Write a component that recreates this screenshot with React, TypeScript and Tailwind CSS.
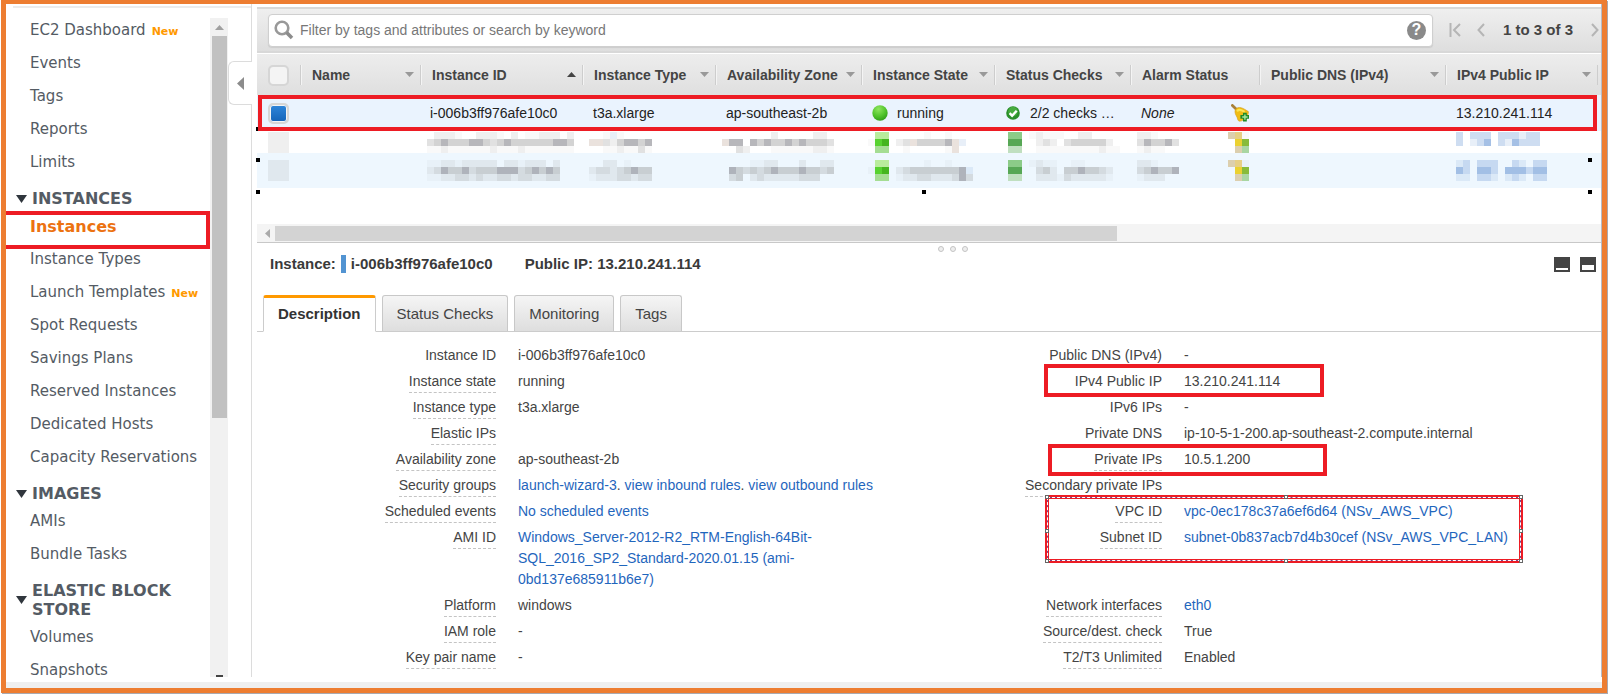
import { useState, type ReactNode } from "react";
import clsx from "clsx";

type NavItem = { label: string; isNew?: boolean };
type NavGroup = { title?: string; items: NavItem[] };

const navGroups: NavGroup[] = [
  {
    items: [
      { label: "EC2 Dashboard", isNew: true },
      { label: "Events" },
      { label: "Tags" },
      { label: "Reports" },
      { label: "Limits" },
    ],
  },
  {
    title: "INSTANCES",
    items: [
      { label: "Instances" },
      { label: "Instance Types" },
      { label: "Launch Templates", isNew: true },
      { label: "Spot Requests" },
      { label: "Savings Plans" },
      { label: "Reserved Instances" },
      { label: "Dedicated Hosts" },
      { label: "Capacity Reservations" },
    ],
  },
  { title: "IMAGES", items: [{ label: "AMIs" }, { label: "Bundle Tasks" }] },
  { title: "ELASTIC BLOCK STORE", items: [{ label: "Volumes" }, { label: "Snapshots" }] },
];

type Column = { label: string; width: string; sort?: "asc" | "none" };

const columns: Column[] = [
  { label: "Name", width: "w-[120px]", sort: "none" },
  { label: "Instance ID", width: "w-[162px]", sort: "asc" },
  { label: "Instance Type", width: "w-[133px]", sort: "none" },
  { label: "Availability Zone", width: "w-[146px]", sort: "none" },
  { label: "Instance State", width: "w-[133px]", sort: "none" },
  { label: "Status Checks", width: "w-[136px]", sort: "none" },
  { label: "Alarm Status", width: "w-[129px]" },
  { label: "Public DNS (IPv4)", width: "w-auto", sort: "none" },
  { label: "IPv4 Public IP", width: "w-[152px]", sort: "none" },
];

// Masked cells: three rows of 7px blocks, one letter per block
const blockColors: Record<string, string> = {
  a: "#8080800d",
  b: "#80808020",
  c: "#8080803c",
  d: "#80808058",
  e: "#70707880",
  f: "#b8a0904d",
  g: "#b9ec9c",
  G: "#57d22f",
  H: "#45b51f",
  i: "#a5dd93",
  j: "#8ccb88",
  J: "#57a755",
  k: "#c0dfc0",
  y: "#e6cf85",
  Y: "#ebd130",
  z: "#dccfae",
  m: "#88bb3a",
  n: "#a9d6a2",
  p: "#9dbce33d",
  q: "#9dbce380",
  Q: "#8fb0dfcc",
};

const maskedRows: string[][][] = [
  [
    [" bbba  bbba b aabbb b", "cdedddeedcdeddddddeed", "aabaaaaaabaaabaaaaaaa"],
    ["  apa    ", "ffcbdeede", "  aabaaca"],
    ["       b     bb ", "fee ededdededddc", "  cb   aaaaaabba"],
    [" gg     a  a   ", "aGH bcfddddefp", " ii  a     af  "],
    [" jj abaaa  bb  ", " JJ  bcb cdddddb ", " kk  aaaaaaaaabaa"],
    ["bba          zya", "ceddec        Ym", "abaa          zn"],
    ["q qqq qqqpqq", "q pqQ qpQqqq", "            "],
  ],
  [
    ["aabbabbbbb bbabbb b", "bceddecdddeeecdeded", "aabbccbcbbccbccbbcc"],
    ["  bb a   ", "bccbcdedd", "abbbccbcc"],
    ["    aabb   b  bb", " edcdcdedddeddcd", " cd bcbbbbbccc"],
    [" gg     a  a   ", "aGH bcdddddddep", " ii abbccbbbcec"],
    [" jj abaa  aa   ", " JJ  cdb ddeddcb ", " kk  bbbacbbbbba "],
    ["bba          zya", "cdedde        Ym", "abbb          zn"],
    ["pq qqq  qp qq", "Qq QQq QQQqQQ", "pp qqp pqp qq"],
  ],
];

function Masked({ rows }: { rows: string[] }) {
  const cols = Math.max(...rows.map((r) => r.length));
  return (
    <svg width={cols * 7} height={21} shapeRendering="crispEdges" className="block" aria-hidden="true">
      {rows.map((row, y) =>
        row.split("").map((c, x) =>
          blockColors[c] ? <rect key={`${x}-${y}`} x={x * 7} y={y * 7} width={7} height={7} fill={blockColors[c]} /> : null
        )
      )}
    </svg>
  );
}

function SearchIcon() {
  return (
    <svg width="20" height="20" viewBox="0 0 20 20" fill="none" aria-hidden="true">
      <circle cx="8" cy="8" r="6.3" stroke="#999" strokeWidth="2.6" />
      <path d="M12.6 12.6l5.4 5.4" stroke="#8c8c8c" strokeWidth="3.6" />
    </svg>
  );
}

function Arrow({ dir, className }: { dir: "up" | "down" | "left"; className?: string }) {
  const d = { up: "M0 5L4.5 0L9 5Z", down: "M0 0H9L4.5 5Z", left: "M5 0V9L0 4.5Z" }[dir];
  return (
    <svg
      width={dir === "left" ? 5 : 9}
      height={dir === "left" ? 9 : 5}
      viewBox={dir === "left" ? "0 0 5 9" : "0 0 9 5"}
      preserveAspectRatio="none"
      fill="currentColor"
      className={clsx("shrink-0", className)}
      aria-hidden="true"
    >
      <path d={d} />
    </svg>
  );
}

function RunningDot() {
  return (
    <svg width="16" height="16" viewBox="0 0 16 16" aria-hidden="true">
      <defs>
        <radialGradient id="dot" cx="0.4" cy="0.25" r="0.8">
          <stop offset="0" stopColor="#8fe65f" />
          <stop offset="0.6" stopColor="#4fc32b" />
          <stop offset="1" stopColor="#2f9a18" />
        </radialGradient>
      </defs>
      <circle cx="8" cy="8" r="7.7" fill="url(#dot)" />
    </svg>
  );
}

function CheckDot() {
  return (
    <svg width="14" height="14" viewBox="0 0 14 14" aria-hidden="true">
      <circle cx="7" cy="7" r="6.8" fill="#2a8f2a" />
      <circle cx="7" cy="5.6" r="4.8" fill="#46ab3f" />
      <path d="M3.6 7.2l2.5 2.5 4.6-5" fill="none" stroke="#fff" strokeWidth="2.4" />
    </svg>
  );
}

function AlarmBell() {
  return (
    <svg width="18" height="18" viewBox="0 0 18 18" aria-hidden="true">
      <path d="M1.4 1.4l4.2 4" stroke="#a8803a" strokeWidth="2.8" strokeLinecap="round" />
      <path
        d="M4 8C3.8 5 6.4 3 9.4 3.6C12.6 4.2 14.6 6 17.4 7.6C17.8 11.6 13.4 17 8.6 17.2C7.8 17.2 6.8 16.4 6.6 15C6.2 12.4 4.2 11 4 8Z"
        fill="#f0bd14"
        stroke="#d39c1c"
        strokeWidth="0.6"
      />
      <path d="M6.6 6.6C8.4 5 11 6.4 12.8 7.4" stroke="#fbe452" strokeWidth="2.2" strokeLinecap="round" fill="none" />
      <path d="M12 8.8h3.8v2.3H18v3.7h-2.2v2.7H12v-2.7H9.4v-3.7H12Z" fill="#1f8a26" />
      <path d="M13.9 10.4v5.4M11.2 13h5.4" stroke="#a6e69e" strokeWidth="1.4" />
    </svg>
  );
}

function Check({ label, defaultChecked }: { label: string; defaultChecked?: boolean }) {
  return (
    <input
      type="checkbox"
      aria-label={label}
      defaultChecked={defaultChecked}
      className="block size-[21px] appearance-none rounded-[5px] border-2 border-[#d6d6d6] bg-[#f4f4f4] bg-clip-padding checked:bg-linear-to-b checked:from-[#2f86da] checked:to-[#1463b8] checked:shadow-[inset_0_0_0_1px_#f4f4f4]"
    />
  );
}

function Sidebar() {
  return (
    <aside className="relative flex w-[246px] shrink-0 border-r border-[#dcdcdc]">
      <div className="absolute top-[2px] right-0 left-[7px] h-[2px] bg-[#ececec]" />
      <nav className="min-h-0 flex-1 pt-[10px] font-['DejaVu_Sans','Verdana',sans-serif] text-[15px] text-[#545b64]">
        {navGroups.map((group, i) => (
          <div key={i}>
            {group.title && (
              <h2 className="flex items-center gap-[5px] pt-[10px] pr-6 pb-[2px] pl-[10px] text-base leading-[19px] font-bold">
                <Arrow dir="down" className="h-[8px] w-[11px] text-[#30363d]" />
                {group.title}
              </h2>
            )}
            <ul>
              {group.items.map((item) => (
                <li key={item.label} className="flex h-[33px] items-center pl-6">
                  <a
                    href="#"
                    className={clsx("whitespace-nowrap", item.label === "Instances" && "text-base font-bold text-[#ec7211]")}
                  >
                    {item.label}
                    {item.isNew && <span className="ml-[6px] text-[11px] font-bold text-[#ff9900]">New</span>}
                  </a>
                </li>
              ))}
            </ul>
          </div>
        ))}
      </nav>
      {/* Scrollbar */}
      <div className="mt-[14px] mr-[23px] flex w-[18px] shrink-0 flex-col items-center bg-[#f1f1f1]">
        <div className="flex h-[18px] items-center">
          <Arrow dir="up" className="text-[#a0a0a0]" />
        </div>
        <div className="h-[58%] w-[15px] bg-[#c1c1c1]" />
        <div className="mt-auto h-[2px] w-[7px] bg-[#444]" />
      </div>
      {/* Highlight around the active entry */}
      <div className="pointer-events-none absolute top-[207px] left-0 h-[38px] w-[204px] border-4 border-l-0 border-[#ed1c24]" />
      <button
        aria-label="Collapse menu"
        className="absolute top-[57px] -right-px flex h-[44px] w-[24px] items-center justify-center rounded-l-md border border-r-0 border-[#dcdcdc] bg-white text-[#8c8c8c]"
      >
        <Arrow dir="left" className="h-[13px] w-[7px]" />
      </button>
    </aside>
  );
}

function Toolbar() {
  return (
    <div className="flex h-[46px] shrink-0 items-center border-y-2 border-[#d8d8d8] bg-linear-to-b from-[#efefef] to-[#dedede] pl-[11px]">
      <div className="flex h-[33px] min-w-0 flex-1 items-center rounded-[4px] border border-[#cfcfcf] bg-white pr-[6px] pl-[5px] shadow-[0_1px_1px_#ccc]">
        <SearchIcon />
        <input
          aria-label="Filter instances"
          placeholder="Filter by tags and attributes or search by keyword"
          className="ml-[6px] min-w-0 flex-1 text-sm outline-none placeholder:text-[#777]"
        />
        <button aria-label="Help" className="flex size-[19px] items-center justify-center rounded-full bg-[#8a8a8a] text-base leading-none font-bold text-white">
          ?
        </button>
      </div>
      <div className="flex items-center pl-4 text-[#b5b5b5]">
        <button aria-label="First page">
          <svg width="12" height="14" fill="none" stroke="currentColor" strokeWidth="2"><path d="M1.5 0v14M11 1L5 7l6 6" /></svg>
        </button>
        <button aria-label="Previous page" className="ml-4">
          <svg width="8" height="14" fill="none" stroke="currentColor" strokeWidth="2"><path d="M7 1L1.5 7L7 13" /></svg>
        </button>
        <span className="ml-[18px] text-[15px] font-bold whitespace-nowrap text-[#444]">1 to 3 of 3</span>
        <button aria-label="Next page" className="mr-[2px] ml-[18px]">
          <svg width="8" height="14" fill="none" stroke="currentColor" strokeWidth="2"><path d="M1 1l5.5 6L1 13" /></svg>
        </button>
      </div>
    </div>
  );
}

function Handle({ className }: { className: string }) {
  return <span className={clsx("absolute size-[4px] bg-black", className)} />;
}

function InstanceTable() {
  return (
    <div className="relative mt-px h-[170px] shrink-0">
      <table className="w-full table-fixed border-collapse text-sm whitespace-nowrap text-[#222]">
        <colgroup>
          <col className="w-[43px]" />
          {columns.map((c) => (
            <col key={c.label} className={c.width} />
          ))}
          <col className="w-[4px]" />
        </colgroup>
        <thead>
          <tr className="h-[41px] bg-linear-to-b from-[#ededed] to-[#dfdfdf] text-left text-[#444]">
            <th className="p-0 pt-[2px] pl-[11px]">
              <Check label="Select all" />
            </th>
            {columns.map((c) => (
              <th key={c.label} className="p-0">
                <div className="flex h-5 items-center justify-between border-l border-[#cdcdcd] pr-[6px] pl-[11px] shadow-[inset_1px_0_0_#f4f4f4]">
                  {c.label}
                  {c.sort && (
                    <Arrow dir={c.sort === "asc" ? "up" : "down"} className={c.sort === "asc" ? "text-[#444]" : "text-[#999]"} />
                  )}
                </div>
              </th>
            ))}
            <th className="p-0">
              <div className="h-5 border-l border-[#cdcdcd]" />
            </th>
          </tr>
        </thead>
        <tbody>
          <tr className="h-[36px] bg-[#eaf3fe]">
            <td className="p-0 pl-[11px]">
              <Check label="Select i-006b3ff976afe10c0" defaultChecked />
            </td>
            <td />
            <td className="p-0 pl-[10px]">i-006b3ff976afe10c0</td>
            <td className="p-0 pl-[11px]">t3a.xlarge</td>
            <td className="p-0 pl-[11px]">ap-southeast-2b</td>
            <td className="p-0 pl-[11px]">
              <div className="flex items-center gap-[9px]">
                <RunningDot />
                running
              </div>
            </td>
            <td className="p-0 pl-3">
              <div className="flex items-center gap-[10px]">
                <CheckDot />
                2/2 checks …
              </div>
            </td>
            <td className="p-0 pr-[10px] pl-[11px]">
              <div className="flex items-center justify-between">
                <i>None</i>
                <AlarmBell />
              </div>
            </td>
            <td />
            <td className="p-0 pl-[11px]">13.210.241.114</td>
            <td />
          </tr>
          {maskedRows.map((cells, i) => (
            <tr key={i} className={i === 0 ? "h-[22px] align-top" : "h-[35px] bg-[#eef7fe] align-top"}>
              <td className={clsx("p-0 pl-[11px]", i === 0 ? "pt-px" : "pt-[7px]")}>
                <Masked rows={["bbb", "bbb", "bbb"]} />
              </td>
              <td />
              {cells.slice(0, 6).map((rows, j) => (
                <td key={j} className={clsx("p-0 pl-[7px]", i === 0 ? "pt-px" : "pt-[7px]")}>
                  <Masked rows={rows} />
                </td>
              ))}
              <td />
              <td className={clsx("p-0 pl-[11px]", i === 0 ? "pt-px" : "pt-[7px]")}>
                <Masked rows={cells[6]} />
              </td>
              <td />
            </tr>
          ))}
        </tbody>
      </table>
      {/* Highlight around the selected row, with selection handles below */}
      <Handle className="top-[73px] -left-px" />
      <div className="pointer-events-none absolute top-[41px] right-[4px] left-px h-[36px] border-4 border-[#ed1c24]" />
      <Handle className="top-[104px] -left-px" />
      <Handle className="top-[136px] -left-px" />
      <Handle className="top-[136px] left-[49.5%]" />
      <Handle className="top-[104px] right-[9px]" />
      <Handle className="top-[136px] right-[9px]" />
    </div>
  );
}

type Detail = {
  label: string;
  value?: ReactNode;
  dashed?: boolean;
  mark?: string;
  selected?: boolean;
};

const link = (text: string) => (
  <a href="#" className="text-[#1f66bd]">
    {text}
  </a>
);

const details: [Detail, Detail][] = [
  [
    { label: "Instance ID", value: "i-006b3ff976afe10c0" },
    { label: "Public DNS (IPv4)", value: "-" },
  ],
  [
    { label: "Instance state", value: "running", dashed: true },
    { label: "IPv4 Public IP", value: "13.210.241.114", mark: "-top-[6px] -left-[118px] h-[33px] w-[280px]" },
  ],
  [
    { label: "Instance type", value: "t3a.xlarge", dashed: true },
    { label: "IPv6 IPs", value: "-" },
  ],
  [
    { label: "Elastic IPs", dashed: true },
    { label: "Private DNS", value: "ip-10-5-1-200.ap-southeast-2.compute.internal" },
  ],
  [
    { label: "Availability zone", value: "ap-southeast-2b", dashed: true },
    { label: "Private IPs", value: "10.5.1.200", dashed: true, mark: "-top-[4px] -left-[114px] h-[32px] w-[279px]" },
  ],
  [
    {
      label: "Security groups",
      value: (
        <>
          {link("launch-wizard-3")}. {link("view inbound rules")}. {link("view outbound rules")}
        </>
      ),
      dashed: true,
    },
    { label: "Secondary private IPs", dashed: true },
  ],
  [
    { label: "Scheduled events", value: link("No scheduled events"), dashed: true },
    {
      label: "VPC ID",
      value: link("vpc-0ec178c37a6ef6d64 (NSv_AWS_VPC)"),
      dashed: true,
      selected: true,
      mark: "-top-[5px] -left-[117px] h-[68px] w-[478px]",
    },
  ],
  [
    {
      label: "AMI ID",
      value: link("Windows_Server-2012-R2_RTM-English-64Bit-SQL_2016_SP2_Standard-2020.01.15 (ami-0bd137e685911b6e7)"),
      dashed: true,
    },
    { label: "Subnet ID", value: link("subnet-0b837acb7d4b30cef (NSv_AWS_VPC_LAN)"), dashed: true },
  ],
  [
    { label: "Platform", value: "windows", dashed: true },
    { label: "Network interfaces", value: link("eth0"), dashed: true },
  ],
  [
    { label: "IAM role", value: "-", dashed: true },
    { label: "Source/dest. check", value: "True", dashed: true },
  ],
  [
    { label: "Key pair name", value: "-", dashed: true },
    { label: "T2/T3 Unlimited", value: "Enabled", dashed: true },
  ],
];

const handleSpots = [
  "-top-[4px] -left-[4px]",
  "-top-[4px] left-1/2",
  "-top-[4px] -right-[4px]",
  "top-1/2 -left-[4px]",
  "top-1/2 -right-[4px]",
  "-bottom-[4px] -left-[4px]",
  "-bottom-[4px] left-1/2",
  "-bottom-[4px] -right-[4px]",
];

function Mark({ className, selected }: { className: string; selected?: boolean }) {
  return (
    <span className={clsx("pointer-events-none absolute border-4 border-[#ed1c24]", className)}>
      {selected && (
        <>
          <span className="absolute -inset-[2px] border border-[#7a4a8c]" />
          <span className="absolute -inset-[2px] border border-dashed border-white" />
          {handleSpots.map((spot) => (
            <span key={spot} className={clsx("absolute size-[4px] border border-[#666] bg-white", spot)} />
          ))}
        </>
      )}
    </span>
  );
}

function DetailPair({ label, value, dashed, mark, selected }: Detail) {
  return (
    <>
      <dt className="text-right leading-[22px] whitespace-nowrap">
        <span className={clsx("inline-block", dashed && "border-b border-dashed border-[#c4c4c4]")}>{label}</span>
      </dt>
      <dd className="relative pt-px pr-8 pb-[4px] pl-[22px] leading-[21px]">
        {value}
        {mark && <Mark className={mark} selected={selected} />}
      </dd>
    </>
  );
}

const tabs = ["Description", "Status Checks", "Monitoring", "Tags"];

function DetailPanel() {
  const [active, setActive] = useState("Description");

  return (
    <section className="min-h-0 flex-1 text-[#444]">
      <div className="flex h-[11px] items-center justify-center gap-[6px] pl-[48px]">
        {[0, 1, 2].map((i) => (
          <span key={i} className="size-[6px] rounded-full border border-[#c4c4c4] bg-[#eee]" />
        ))}
      </div>
      <div className="flex h-5 items-center pr-[5px] pl-[13px] text-[15px] font-bold text-[#3a3a3a]">
        <span>Instance:</span>
        <span className="mr-[5px] ml-[5px] h-[18px] w-[5px] bg-[#5294d2]" />
        <span>i-006b3ff976afe10c0</span>
        <span className="ml-8">Public IP: 13.210.241.114</span>
        <button aria-label="Minimize panel" className="ml-auto flex h-[15px] w-4 flex-col justify-end bg-[#444] p-[2px]">
          <span className="h-[2px] w-full bg-white" />
        </button>
        <button aria-label="Split panel" className="ml-[10px] flex h-[15px] w-4 flex-col justify-end bg-[#444] p-[2px]">
          <span className="h-[5px] w-full bg-white" />
        </button>
      </div>
      <div role="tablist" className="mt-[21px] flex h-[37px] items-stretch gap-[6px] border-b border-[#ccc] pl-[6px] text-[15px]">
        {tabs.map((tab) => (
          <button
            key={tab}
            role="tab"
            aria-selected={active === tab}
            onClick={() => setActive(tab)}
            className={clsx(
              "rounded-t-[3px] border px-[14px]",
              active === tab
                ? "-mb-px border-t-[3px] border-[#ccc] border-t-[#ff9900] border-b-white bg-white font-bold text-[#333]"
                : "border-b-0 border-[#c8c8c8] bg-linear-to-b from-[#f5f5f5] to-[#dedede] pt-[2px]"
            )}
          >
            {tab}
          </button>
        ))}
      </div>
      <dl className="grid grid-cols-[239fr_427fr_239fr_439fr] pt-3 text-sm">
        {details.map(([left, right]) => (
          <div key={left.label} className="contents">
            <DetailPair {...left} />
            <DetailPair {...right} />
          </div>
        ))}
      </dl>
    </section>
  );
}

export default function App() {
  return (
    <div className="h-screen bg-white pr-px pb-px pl-px font-['Liberation_Sans',Arial,sans-serif]">
      <div className="flex h-full flex-col border-[5px] border-t-4 border-[#ed7d31] shadow-[1px_1px_0_#a9a9b0]">
        <div className="flex min-h-0 flex-1 border-r border-[#b4bcc8]">
          <Sidebar />
          <main className="ml-[5px] flex min-w-0 flex-1 flex-col pt-[3px]">
            <Toolbar />
            <InstanceTable />
            <div className="flex h-[19px] shrink-0 items-center border-b border-[#c8c8c8] bg-[#f4f4f4] pl-2">
              <Arrow dir="left" className="text-[#aaa]" />
              <div className="ml-[5px] h-[15px] w-[63%] bg-[#d3d3d3]" />
            </div>
            <DetailPanel />
          </main>
        </div>
        <div className="mt-[5px] h-[6px] shrink-0 bg-[#efefef]" />
      </div>
    </div>
  );
}
